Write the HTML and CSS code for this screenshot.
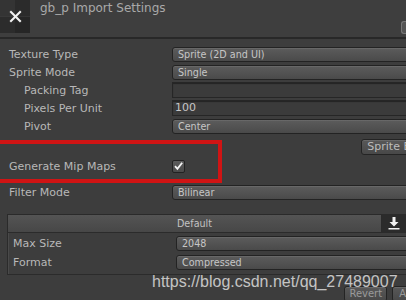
FILE: index.html
```html
<!DOCTYPE html>
<html lang="en">
<head>
    <meta charset="UTF-8">
    <title>gb_p Import Settings</title>
    <link rel="stylesheet" href="styles.css">
</head>
<body>
    <header class="top">
        <div class="thumb">
            <svg width="13" height="13" viewBox="0 0 13 13"><path d="M2 2 L11 11 M11 2 L2 11" stroke="#f2f2f2" stroke-width="2.1" stroke-linecap="square"/></svg>
        </div>
        <h2 class="title">gb_p Import Settings</h2>
        <span class="open-btn"></span>
    </header>

    <div class="settings">
        <div class="row"><span class="label">Texture Type</span><span class="popup">Sprite (2D and UI)</span></div>
        <div class="row"><span class="label">Sprite Mode</span><span class="popup">Single</span></div>
        <div class="row"><span class="label sub">Packing Tag</span><span class="field"></span></div>
        <div class="row"><span class="label sub">Pixels Per Unit</span><span class="field">100</span></div>
        <div class="row"><span class="label sub">Pivot</span><span class="popup">Center</span></div>
        <div class="row btn-row"><span class="button">Sprite Editor</span></div>
        <div class="row mip"><span class="label">Generate Mip Maps</span>
            <span class="check"><svg width="12" height="12" viewBox="0 0 12 12"><path d="M2.2 6.2 L4.8 9 L10 2.4" fill="none" stroke="#f4f4f4" stroke-width="2"/></svg></span>
        </div>
        <div class="row filter"><span class="label">Filter Mode</span><span class="popup">Bilinear</span></div>

        <div class="platform">
            <div class="tab-bar">
                <span class="tab">Default</span>
                <span class="dl">
                    <svg width="14" height="14" viewBox="0 0 14 14"><path d="M5.5 1 H8.5 V6 H11.5 L7 10.5 L2.5 6 H5.5 Z M1.5 12 H12.5 V13.5 H1.5 Z" fill="#f2f2f2"/></svg>
                </span>
            </div>
            <div class="panel">
                <div class="row"><span class="label">Max Size</span><span class="popup">2048</span></div>
                <div class="row second"><span class="label">Format</span><span class="popup">Compressed</span></div>
            </div>
        </div>

        <div class="footer">
            <span class="button small">Revert</span>
            <span class="button small">A</span>
        </div>
    </div>

    <div class="highlight"></div>
    <div class="watermark">https://blog.csdn.net/qq_27489007</div>
</body>
</html>
```
FILE: styles.css
```css
body {
    margin: 0;
    width: 406px;
    height: 300px;
    overflow: hidden;
    position: relative;
    background-color: #3d3d3d;
    font-family: "DejaVu Sans", Verdana, sans-serif;
    color: #b8b8b8;
}

.top {
    display: flex;
    height: 37px;
    border-bottom: 2px solid #282828;
    background-color: #3e3e3e;
}

.thumb {
    width: 30px;
    height: 33px;
    display: flex;
    align-items: center;
    justify-content: center;
    background:
        linear-gradient(90deg, #343434 50%, #2b2b2b 50%) top / 100% 50% no-repeat,
        linear-gradient(90deg, #2c2c2c 50%, #262626 50%) bottom / 100% 50% no-repeat;
}

.title {
    margin: 1px 0 0 10px;
    font-size: 12px;
    font-weight: normal;
    color: #a9a9a9;
}

.open-btn {
    margin-left: auto;
    margin-top: 21px;
    width: 4px;
    height: 11px;
    border: 1px solid #777;
    border-right: none;
    border-radius: 3px 0 0 3px;
    background-color: #555;
}

.settings {
    padding: 6px 0 0 9px;
}

.row {
    display: flex;
    align-items: center;
    height: 18px;
}

.label {
    width: 163px;
    flex-shrink: 0;
    font-size: 11px;
    white-space: nowrap;
}

.label.sub {
    padding-left: 15px;
    width: 148px;
}

.popup, .field {
    flex: 1;
    height: 13px;
    margin-right: -10px;
    border: 1px solid #232323;
    border-radius: 3px;
    padding-left: 5px;
    font-size: 9.6px;
    line-height: 13px;
    color: #c6c6c6;
    white-space: nowrap;
    background: linear-gradient(#5c5c5c, #4a4a4a);
    box-shadow: inset 0 1px 0 rgba(255, 255, 255, 0.08);
}

.field {
    height: 14px;
    border-radius: 0;
    padding-left: 2px;
    background: #3b3b3b;
    border-color: #262626;
    font-size: 11px;
    line-height: 14px;
    box-shadow: inset 0 1px 1px rgba(0, 0, 0, 0.4);
}

.btn-row {
    height: 19px;
    margin-top: 2px;
    justify-content: flex-end;
}

.button {
    margin-right: -40px;
    padding: 0 9px 0 5px;
    height: 14px;
    border: 1px solid #242424;
    border-radius: 3px;
    font-size: 11px;
    line-height: 14px;
    color: #bcbcbc;
    white-space: nowrap;
    background: linear-gradient(#585858, #484848);
    box-shadow: inset 0 1px 0 rgba(255, 255, 255, 0.1);
}

.mip {
    margin-top: 1px;
}

.check {
    width: 11px;
    height: 11px;
    border: 1px solid #222;
    border-radius: 2px;
    display: flex;
    align-items: center;
    justify-content: center;
    background: linear-gradient(#5c5c5c, #4a4a4a);
}

.filter {
    margin-top: 8px;
}

.platform {
    margin: 13px 0 0 -2px;
}

.tab-bar {
    display: flex;
    height: 18px;
}

.tab {
    flex: 1;
    text-align: center;
    font-size: 9.6px;
    line-height: 18px;
    color: #c2c2c2;
    border: 1px solid #2a2a2a;
    border-bottom: none;
    background: linear-gradient(#545454, #474747);
}

.dl {
    width: 24px;
    display: flex;
    align-items: center;
    justify-content: center;
    background-color: #2b2b2b;
}

.panel {
    height: 40px;
    padding: 1px 0 0 5px;
    border: 1px solid #2b2b2b;
    border-right: none;
    box-shadow: inset 1px 0 0 #4a4a4a;
}

.panel .label {
    width: 163px;
}

.panel .second {
    margin-top: 1px;
}

.footer {
    display: flex;
    justify-content: flex-end;
    gap: 5px;
    margin-top: 11px;
}

.button.small {
    margin-right: 0;
    padding: 0 4px;
    font-size: 10px;
    color: #9a9a9a;
}

.button.small:last-child {
    margin-right: -7px;
    padding: 0 6px;
}

.highlight {
    position: absolute;
    left: -6px;
    top: 140px;
    width: 220px;
    height: 35px;
    border: 4.5px solid #d01414;
}

.watermark {
    position: absolute;
    left: 152px;
    top: 273px;
    font-family: "Liberation Sans", Arial, sans-serif;
    font-size: 16px;
    color: rgba(228, 228, 228, 0.82);
    white-space: nowrap;
}
```
